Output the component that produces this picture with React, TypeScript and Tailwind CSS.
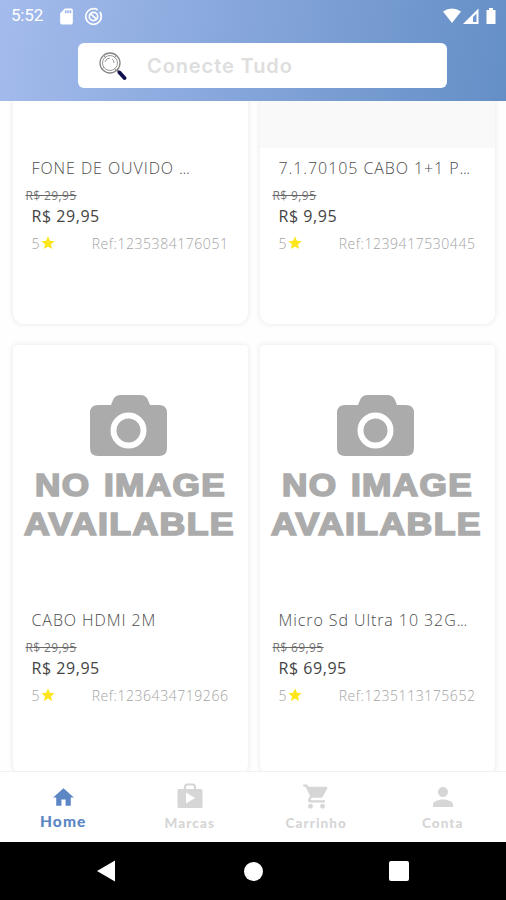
import {
  MdHome,
  MdPerson,
  MdShoppingCart,
  MdSdCard,
  MdStar,
} from "react-icons/md";

type Item = {
  name: string;
  truncated?: boolean;
  price: string;
  reference: string;
  hasImage?: boolean;
  imageBg?: string;
};

const items: Item[] = [
  {
    name: "FONE DE OUVIDO ",
    truncated: true,
    price: "R$ 29,95",
    reference: "1235384176051",
    hasImage: true,
    imageBg: "bg-white",
  },
  {
    name: "7.1.70105 CABO 1+1 P",
    truncated: true,
    price: "R$ 9,95",
    reference: "1239417530445",
    hasImage: true,
    imageBg: "bg-[#f9f9f9]",
  },
  { name: "CABO HDMI 2M", price: "R$ 29,95", reference: "1236434719266" },
  {
    name: "Micro Sd Ultra 10 32G",
    truncated: true,
    price: "R$ 69,95",
    reference: "1235113175652",
  },
];

function NoImage() {
  return (
    <svg viewBox="0 0 235 256" className="h-[256px] w-[235px]" fill="#ababab">
      <path d="M85 60h13l2-5q2-5 8-5h19q6 0 8 5l2 5h9q8 0 8 8v35q0 8-8 8H85q-8 0-8-8V68q0-8 8-8z" />
      <circle cx="115.5" cy="85.5" r="15" fill="none" stroke="#fff" strokeWidth="6" />
      <g
        fontFamily="'Liberation Sans', sans-serif"
        fontWeight="700"
        fontSize="31"
        stroke="#ababab"
        strokeWidth="1.7"
      >
        <text x="22" y="151" letterSpacing="1.2" wordSpacing="2" textLength="191" lengthAdjust="spacingAndGlyphs">
          NO IMAGE
        </text>
        <text x="11" y="190" letterSpacing="1.2" textLength="211" lengthAdjust="spacingAndGlyphs">
          AVAILABLE
        </text>
      </g>
    </svg>
  );
}

function Card({ item }: { item: Item }) {
  return (
    <div className="h-[430px] overflow-hidden rounded-t-[4px] rounded-b-[11px] bg-white shadow-[0_0_5px_1px_rgba(0,0,0,0.07)]">
      {item.hasImage ? (
        <div className={`h-[254px] ${item.imageBg}`} />
      ) : (
        <NoImage />
      )}
      <div
        className={`${
          item.hasImage ? "pt-px" : ""
        } pl-[19px] pr-[19px] font-['Open_Sans',sans-serif] whitespace-nowrap`}
      >
        <h2 className="pt-[7px] text-[16px] leading-[24px] font-light tracking-[0.92px] text-[#4c4c4c]">
          {item.name}
          {item.truncated && <span className="tracking-[-0.4px]">...</span>}
        </h2>
        <p className="-ml-[6px] mt-[8px] text-[12px] leading-[16px] tracking-[0.4px] text-[#777] line-through decoration-[#666]">
          {item.price}
        </p>
        <p className="text-[16px] leading-[24px] tracking-[0.55px] text-[#444]">
          {item.price}
        </p>
        <div className="mt-[5px] flex h-[20px] items-center justify-between text-[14px] font-light text-[#a3a3a3]">
          <span className="flex items-center">
            5<MdStar className="size-4 text-[#fde71c]" />
          </span>
          <span className="tracking-[0.55px]">Ref:{item.reference}</span>
        </div>
      </div>
    </div>
  );
}

function Header() {
  return (
    <header className="h-[101px] bg-linear-[100deg] from-[#a4bbed] to-[#648fc6]">
      <div className="flex h-[32px] items-center pl-[11px] pr-[8px] text-white">
        <span className="font-[Roboto,sans-serif] text-[17px] tracking-[-0.2px]">
          5:52
        </span>
        <MdSdCard className="ml-[14px] size-[19px]" />
        <svg viewBox="0 0 20 20" className="ml-[8px] size-[19px]" fill="none" stroke="currentColor">
          <circle cx="10" cy="10" r="8.2" strokeWidth="1.8" strokeDasharray="43 3" />
          <circle cx="10" cy="10" r="4.4" strokeWidth="1.8" />
          <path d="M6.5 7l7 6" strokeWidth="1.8" />
        </svg>
        <svg viewBox="0 0 56 18" className="ml-auto h-[18px] w-[56px]" fill="currentColor">
          <path d="M1 4.5Q10-1.5 19 4.5L10 16z" />
          <path d="M21 17L36.5 1.5V17z" />
          <path d="M31 10l3.5-3.5V15H31z" fill="#6f97cf" />
          <path d="M47 1h4v2h2.5v14h-9V3H47z" />
        </svg>
      </div>
      <div className="ml-[78px] mt-[11px] flex h-[45px] w-[369px] items-center rounded-[6px] bg-white">
        <svg viewBox="0 0 30 30" className="ml-[19px] size-[30px]" fill="none">
          <circle cx="13" cy="12" r="10" stroke="#858585" strokeWidth="1.3" />
          <circle cx="13" cy="12" r="7.5" stroke="#999" strokeWidth="1" />
          <path d="M8 11q1-4 5-4M15 8q2 1 2 4M6 4l3 3M20 20l-3-3M19 5l-2 2M5 18l2-2" stroke="#999" />
          <path d="M20 19l3 3" stroke="#777" strokeWidth="2" />
          <path d="M22.5 21.5l5 5.5" stroke="#100f4d" strokeWidth="3.8" strokeLinecap="round" />
        </svg>
        <span className="ml-[20px] font-[Inter,sans-serif] text-[20px] font-semibold tracking-[0.9px] text-[#dedede]">
          Conecte Tudo
        </span>
      </div>
    </header>
  );
}

function BottomNav() {
  return (
    <nav className="grid h-[71px] grid-cols-4 border-t border-[#f1f1f1] bg-white text-center font-[Lato,sans-serif] text-[13.5px] leading-[18px] font-black tracking-[1.1px] text-[#d6d6d6]">
      <a className="flex flex-col items-center pt-[13px] text-[15.5px] text-[#5d86c4]">
        <MdHome className="size-[25px]" />
        <span className="mt-[2px]">Home</span>
      </a>
      <a className="flex flex-col items-center pt-[10px]">
        <svg viewBox="0 0 26 29" className="h-[29px] w-[26px]">
          <rect x="0.5" y="7" width="25" height="19" rx="1.5" fill="currentColor" />
          <path d="M8 7V5q0-2.5 2.5-2.5h5Q18 2.5 18 5v2" fill="none" stroke="currentColor" strokeWidth="2.2" />
          <path d="M9 10.5v11l9-5.5z" fill="#fff" />
        </svg>
        <span className="mt-[3px]">Marcas</span>
      </a>
      <a className="flex flex-col items-center pt-[10px]">
        <MdShoppingCart className="size-[29px]" />
        <span className="mt-[3px]">Carrinho</span>
      </a>
      <a className="flex flex-col items-center pt-[10px]">
        <MdPerson className="size-[30px]" />
        <span className="mt-[2px]">Conta</span>
      </a>
    </nav>
  );
}

export default function App() {
  return (
    <div className="flex h-[900px] w-[506px] flex-col overflow-hidden bg-[#fefefe]">
      <Header />
      <main className="h-[670px] overflow-hidden">
        <div className="-mt-[207px] grid grid-cols-[235px_235px] gap-x-[12px] gap-y-[21px] pl-[12.5px]">
          {items.map((item) => (
            <Card key={item.reference} item={item} />
          ))}
        </div>
      </main>
      <BottomNav />
      <div className="flex h-[58px] items-center bg-black pl-[96px]">
        <svg viewBox="0 0 20 22" className="h-[22px] w-[20px]" fill="#fff">
          <path d="M1 11L19 0.5v21z" />
        </svg>
        <div className="ml-[128px] size-[19px] rounded-full bg-white" />
        <div className="ml-[126px] size-[20px] rounded-[2px] bg-white" />
      </div>
    </div>
  );
}
